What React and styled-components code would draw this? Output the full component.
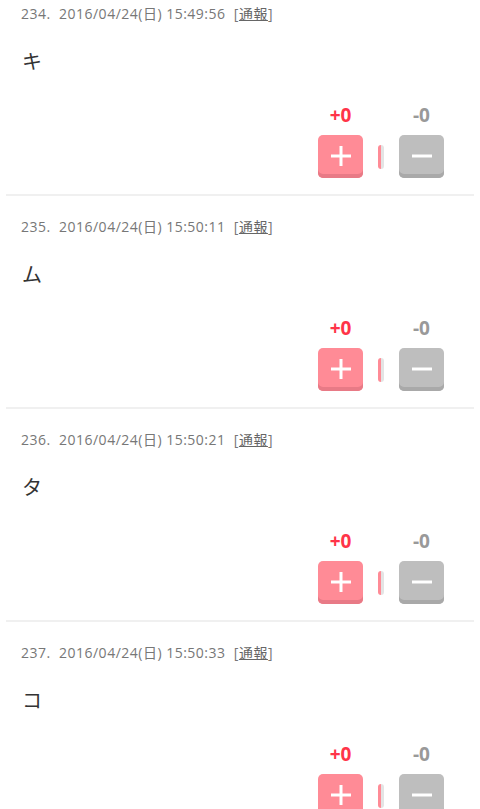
import React from 'react'
import styled, { createGlobalStyle } from 'styled-components'

const GlobalStyle = createGlobalStyle`
  body {
    margin: 0;
    background: #fff;
    font-family: 'Open Sans', 'Noto Sans CJK JP', sans-serif;
    overflow: hidden;
  }
`

const posts = [
  { no: 234, date: '2016/04/24(日) 15:49:56', text: 'キ' },
  { no: 235, date: '2016/04/24(日) 15:50:11', text: 'ム' },
  { no: 236, date: '2016/04/24(日) 15:50:21', text: 'タ' },
  { no: 237, date: '2016/04/24(日) 15:50:33', text: 'コ' }
]

function VoteBox () {
  return (
    <Votes>
      <Count plus>+0</Count>
      <span />
      <Count>-0</Count>
      <VoteButton plus aria-label='plus'>
        <svg width='22' height='22' viewBox='0 0 22 22'>
          <path d='M11 1v20M1 11h20' stroke='#fff' strokeWidth='3' />
        </svg>
      </VoteButton>
      <Ratio />
      <VoteButton aria-label='minus'>
        <svg width='22' height='22' viewBox='0 0 22 22'>
          <path d='M1 11h20' stroke='#fff' strokeWidth='3' />
        </svg>
      </VoteButton>
    </Votes>
  )
}

function App () {
  return (
    <>
      <GlobalStyle />
      <List>
        {posts.map(p => (
          <Item key={p.no}>
            <Meta>
              {p.no}.&nbsp;&nbsp;{p.date}&nbsp;&nbsp;[<Report>通報</Report>]
            </Meta>
            <Body>{p.text}</Body>
            <VoteBox />
          </Item>
        ))}
      </List>
    </>
  )
}

const List = styled.div`
  margin-top: -17px;
`

const Item = styled.div`
  margin: 0 6px;
  padding: 21px 30px 16px 15px;
  border-bottom: 2px solid #f0f0f0;
`

const Meta = styled.div`
  font-size: 14px;
  line-height: 20px;
  letter-spacing: 0.5px;
  color: #777;
`

const Report = styled.span`
  color: #666;
  text-decoration: underline;
`

const Body = styled.div`
  margin-top: 23px;
  font-size: 20px;
  line-height: 30px;
  color: #333;
  padding-left: 1px;
`

const Votes = styled.div`
  margin-top: 28px;
  margin-left: auto;
  width: max-content;
  display: grid;
  grid-template-columns: 45px 6px 45px;
  column-gap: 15px;
  row-gap: 10px;
  align-items: center;
  justify-items: center;
`

const Count = styled.div`
  font-size: 19px;
  line-height: 20px;
  font-weight: 700;
  color: ${p => (p.plus ? '#ff3448' : '#999')};
`

const VoteButton = styled.button`
  width: 45px;
  height: 43px;
  border: none;
  padding: 0 0 2px;
  border-radius: 5px;
  display: flex;
  align-items: center;
  justify-content: center;
  background: ${p => (p.plus ? '#ff8b96' : '#bebebe')};
  box-shadow: inset 0 -4px 0 ${p => (p.plus ? '#e87a86' : '#a9a9a9')};
`

const Ratio = styled.div`
  width: 6px;
  height: 24px;
  border-radius: 3px;
  background: linear-gradient(to right, #ff8b96 50%, #e4e4e4 50%);
`

export default App
